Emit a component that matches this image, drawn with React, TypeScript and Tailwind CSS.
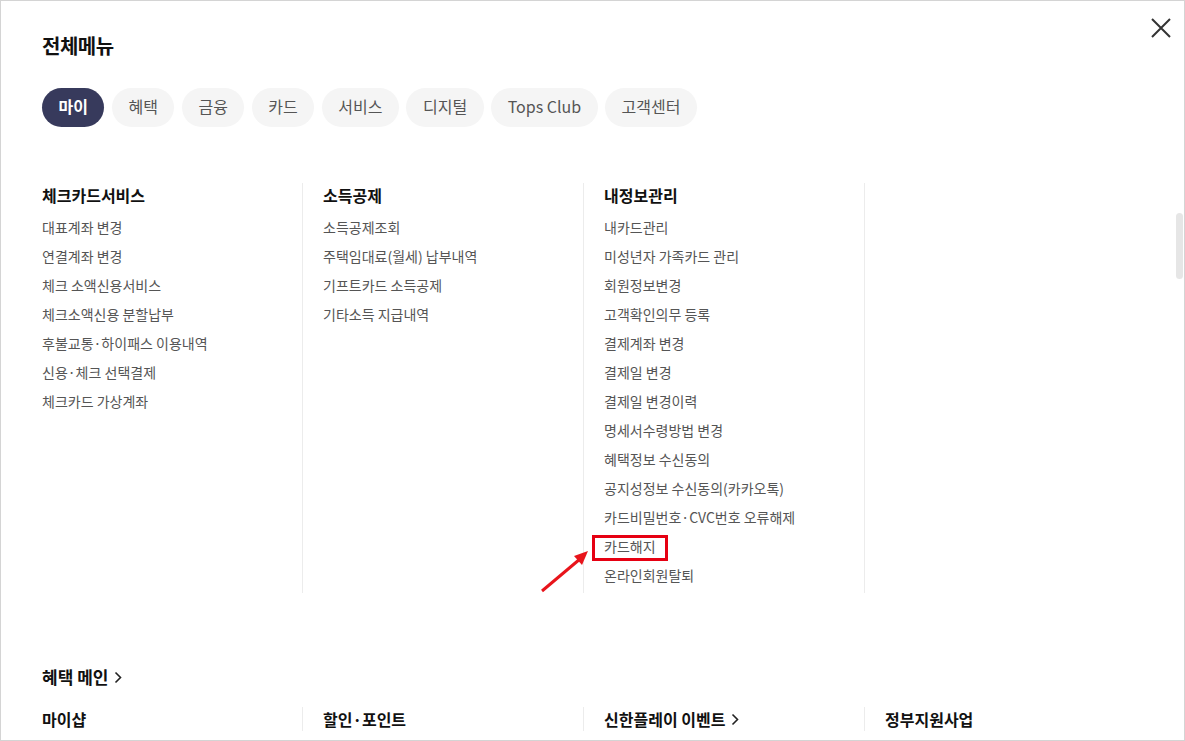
import { ReactNode } from "react";

const tabs = ["마이", "혜택", "금융", "카드", "서비스", "디지털", "Tops Club", "고객센터"];

const groups: { title: string; items: string[] }[] = [
  {
    title: "체크카드서비스",
    items: [
      "대표계좌 변경",
      "연결계좌 변경",
      "체크 소액신용서비스",
      "체크소액신용 분할납부",
      "후불교통·하이패스 이용내역",
      "신용·체크 선택결제",
      "체크카드 가상계좌",
    ],
  },
  {
    title: "소득공제",
    items: ["소득공제조회", "주택임대료(월세) 납부내역", "기프트카드 소득공제", "기타소득 지급내역"],
  },
  {
    title: "내정보관리",
    items: [
      "내카드관리",
      "미성년자 가족카드 관리",
      "회원정보변경",
      "고객확인의무 등록",
      "결제계좌 변경",
      "결제일 변경",
      "결제일 변경이력",
      "명세서수령방법 변경",
      "혜택정보 수신동의",
      "공지성정보 수신동의(카카오톡)",
      "카드비밀번호·CVC번호 오류해제",
      "카드해지",
      "온라인회원탈퇴",
    ],
  },
];

function Chevron() {
  return (
    <svg width="8" height="13" viewBox="0 0 8 13" className="ml-[6px] mt-[1px]">
      <polyline points="1.5,1.5 6.5,6.5 1.5,11.5" fill="none" stroke="#222" strokeWidth="1.6" />
    </svg>
  );
}

function Column({ first, children }: { first?: boolean; children?: ReactNode }) {
  return (
    <div className={first ? "w-[260px] shrink-0" : "w-[281px] shrink-0 border-l border-[#ececec] pl-[20px]"}>
      {children}
    </div>
  );
}

export default function App() {
  return (
    <div
      className="relative w-[1185px] h-[741px] overflow-hidden bg-white border border-[#d4d4d4]"
      style={{ fontFamily: '"Noto Sans CJK KR", "Noto Sans", sans-serif' }}
    >
      <button className="absolute left-[1149px] top-[16px] w-[22px] h-[22px]">
        <svg width="22" height="22" viewBox="0 0 22 22">
          <path d="M2 2 L20 20 M20 2 L2 20" stroke="#333" strokeWidth="2" fill="none" />
        </svg>
      </button>

      <div className="absolute left-[1175px] top-[212px] w-[7px] h-[66px] rounded-full bg-[#e6e6e6]" />

      <div className="pl-[41px] pt-[31px]">
        <h1 className="text-[20px] leading-[28px] font-bold text-[#111] tracking-[-0.5px]">전체메뉴</h1>

        <div className="flex gap-[7.5px] mt-[28px]">
          {tabs.map((t, i) => (
            <div
              key={t}
              className={
                i === 0
                  ? "h-[39px] px-[16.5px] pb-[3px] rounded-full bg-[#373a5c] text-white font-bold text-[16px] flex items-center"
                  : "h-[39px] px-[16.5px] pb-[3px] rounded-full bg-[#f5f5f5] text-[#555] text-[16px] flex items-center"
              }
            >
              {t}
            </div>
          ))}
        </div>

        <div className="flex mt-[56px]">
          {groups.map((g, i) => (
            <Column key={g.title} first={i === 0}>
              <div className="pb-[3px]">
                <div className="text-[16px] leading-[24px] font-bold text-[#111]">{g.title}</div>
                <ul className="mt-[6px]">
                  {g.items.map((it) => (
                    <li key={it} className="relative h-[29px] leading-[29px] text-[14px] text-[#555]">
                      {it}
                      {it === "카드해지" && (
                        <span className="absolute -left-[12px] top-[3px] w-[76px] h-[26px] border-[3px] border-[#e60012]" />
                      )}
                    </li>
                  ))}
                </ul>
              </div>
            </Column>
          ))}
          <Column />
        </div>

        <div className="mt-[72px] flex items-center text-[17px] leading-[24px] font-bold text-[#111]">
          혜택 메인
          <Chevron />
        </div>

        <div className="flex mt-[18px]">
          <Column first>
            <div className="text-[16px] leading-[24px] font-bold text-[#111]">마이샵</div>
          </Column>
          <Column>
            <div className="text-[16px] leading-[24px] font-bold text-[#111]">할인·포인트</div>
          </Column>
          <Column>
            <div className="flex items-center text-[16px] leading-[24px] font-bold text-[#111]">
              신한플레이 이벤트
              <Chevron />
            </div>
          </Column>
          <Column>
            <div className="text-[16px] leading-[24px] font-bold text-[#111]">정부지원사업</div>
          </Column>
        </div>
      </div>

      <svg className="absolute left-[535px] top-[544px]" width="60" height="52" viewBox="0 0 60 52">
        <line x1="6" y1="46" x2="44" y2="14" stroke="#e8141b" strokeWidth="3" />
        <polygon points="52,6 38,11 46,20" fill="#e8141b" />
      </svg>
    </div>
  );
}
